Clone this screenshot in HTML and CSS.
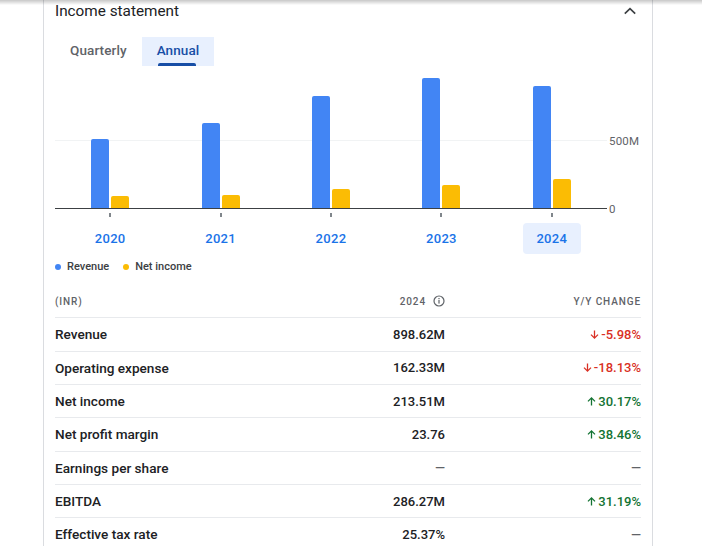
FILE: index.html
```html
<!DOCTYPE html>
<html lang="en">
<head>
<meta charset="utf-8">
<title>Income statement</title>
<link rel="stylesheet" href="styles.css">
</head>
<body>
<div class="topshadow"></div>
<section class="card">
  <header class="card-head">
    <h2 class="title">Income statement</h2>
    <svg class="chev" width="20" height="20" viewBox="0 0 20 20"><polyline points="4.8,12.6 10,7.6 15.2,12.6" fill="none" stroke="#3c4043" stroke-width="1.7"/></svg>
  </header>

  <nav class="tabs">
    <span class="tab">Quarterly</span>
    <span class="tab tab-active">Annual</span>
  </nav>

  <div class="chart">
    <div class="plot">
      <div class="gridline"></div>
      <div class="col"><span class="bar rev" style="height:69px"></span><span class="bar ni" style="height:12px"></span></div>
      <div class="col"><span class="bar rev" style="height:85px"></span><span class="bar ni" style="height:13px"></span></div>
      <div class="col"><span class="bar rev" style="height:112px"></span><span class="bar ni" style="height:19px"></span></div>
      <div class="col"><span class="bar rev" style="height:130px"></span><span class="bar ni" style="height:23px"></span></div>
      <div class="col"><span class="bar rev" style="height:122px"></span><span class="bar ni" style="height:29px"></span></div>
      <span class="ylabel y500">500M</span>
      <span class="ylabel y0">0</span>
    </div>
    <div class="ticks">
      <span class="tick"></span><span class="tick"></span><span class="tick"></span><span class="tick"></span><span class="tick"></span>
    </div>
    <div class="years">
      <span class="year">2020</span>
      <span class="year">2021</span>
      <span class="year">2022</span>
      <span class="year">2023</span>
      <span class="year year-active">2024</span>
    </div>
  </div>

  <div class="legend">
    <span class="leg"><i class="dot dot-rev"></i>Revenue</span>
    <span class="leg"><i class="dot dot-ni"></i>Net income</span>
  </div>

  <div class="table">
    <div class="row head">
      <span class="c-label">(INR)</span>
      <span class="c-val">2024 <svg class="info" width="12" height="12" viewBox="0 0 12 12"><circle cx="6" cy="6" r="5" fill="none" stroke="#5f6368" stroke-width="1.2"/><rect x="5.4" y="5" width="1.2" height="3.6" fill="#5f6368"/><rect x="5.4" y="3" width="1.2" height="1.2" fill="#5f6368"/></svg></span>
      <span class="c-chg">Y/Y change</span>
    </div>
    <div class="row">
      <span class="c-label">Revenue</span>
      <span class="c-val">898.62M</span>
      <span class="c-chg down"><svg class="arr" width="11" height="11" viewBox="0 0 11 11"><path d="M5.5 1.5v7.5M2 5.6l3.5 3.5 3.5-3.5" fill="none" stroke="currentColor" stroke-width="1.3"/></svg>-5.98%</span>
    </div>
    <div class="row">
      <span class="c-label">Operating expense</span>
      <span class="c-val">162.33M</span>
      <span class="c-chg down"><svg class="arr" width="11" height="11" viewBox="0 0 11 11"><path d="M5.5 1.5v7.5M2 5.6l3.5 3.5 3.5-3.5" fill="none" stroke="currentColor" stroke-width="1.3"/></svg>-18.13%</span>
    </div>
    <div class="row">
      <span class="c-label">Net income</span>
      <span class="c-val">213.51M</span>
      <span class="c-chg up"><svg class="arr" width="11" height="11" viewBox="0 0 11 11"><path d="M5.5 9.5V2M2 5.4l3.5-3.5 3.5 3.5" fill="none" stroke="currentColor" stroke-width="1.3"/></svg>30.17%</span>
    </div>
    <div class="row">
      <span class="c-label">Net profit margin</span>
      <span class="c-val">23.76</span>
      <span class="c-chg up"><svg class="arr" width="11" height="11" viewBox="0 0 11 11"><path d="M5.5 9.5V2M2 5.4l3.5-3.5 3.5 3.5" fill="none" stroke="currentColor" stroke-width="1.3"/></svg>38.46%</span>
    </div>
    <div class="row">
      <span class="c-label">Earnings per share</span>
      <span class="c-val dash">—</span>
      <span class="c-chg dash">—</span>
    </div>
    <div class="row">
      <span class="c-label">EBITDA</span>
      <span class="c-val">286.27M</span>
      <span class="c-chg up"><svg class="arr" width="11" height="11" viewBox="0 0 11 11"><path d="M5.5 9.5V2M2 5.4l3.5-3.5 3.5 3.5" fill="none" stroke="currentColor" stroke-width="1.3"/></svg>31.19%</span>
    </div>
    <div class="row">
      <span class="c-label">Effective tax rate</span>
      <span class="c-val">25.37%</span>
      <span class="c-chg dash">—</span>
    </div>
  </div>
</section>
</body>
</html>
```
FILE: styles.css
```css
* { box-sizing: border-box; }
html, body { margin: 0; padding: 0; background: #fff; }
body {
  font-family: Roboto, "Liberation Sans", Arial, sans-serif;
  color: #202124;
  width: 702px;
  height: 546px;
  overflow: hidden;
}
.topshadow {
  position: fixed;
  top: 0; left: 0; right: 0;
  height: 5px;
  background: linear-gradient(to bottom, rgba(0,0,0,0.22), rgba(0,0,0,0));
  z-index: 5;
}
.card {
  margin-left: 43px;
  width: 610px;
  border-left: 1px solid #dadce0;
  border-right: 1px solid #dadce0;
  padding: 0 11px;
  min-height: 546px;
}
.card-head {
  display: flex;
  align-items: center;
  justify-content: space-between;
  height: 22px;
}
.title {
  margin: 0;
  font-size: 15.3px;
  font-weight: 400;
  line-height: 24px;
  color: #202124;
}
.chev { margin-right: 1px; display: block; }

.tabs {
  display: flex;
  margin-top: 15px;
  height: 29px;
}
.tab {
  display: flex;
  align-items: center;
  padding: 0 15px 3px 15px;
  font-size: 13.5px;
  font-weight: 500;
  color: #5f6368;
  letter-spacing: 0.1px;
}
.tab-active {
  position: relative;
  background: #e8f0fe;
  color: #174ea6;
}
.tab-active::after {
  content: "";
  position: absolute;
  left: 16px;
  bottom: 0;
  width: 38px;
  height: 3px;
  border-radius: 2px 2px 0 0;
  background: #174ea6;
}

.chart { margin-top: 4px; width: 552px; }
.plot {
  position: relative;
  height: 139px;
  display: grid;
  grid-template-columns: repeat(5, 1fr);
  border-bottom: 1px solid #3c4043;
}
.gridline {
  position: absolute;
  left: 0; right: 0;
  bottom: 67px;
  height: 1px;
  background: #f1f3f4;
}
.col {
  display: flex;
  justify-content: center;
  align-items: flex-end;
  gap: 2px;
  position: relative;
}
.bar {
  display: block;
  width: 18px;
  border-radius: 2px 2px 0 0;
}
.rev { background: #4285f4; }
.ni { background: #fbbc04; }
.ylabel {
  position: absolute;
  left: 554px;
  font-size: 11.5px;
  color: #5f6368;
  line-height: 12px;
  letter-spacing: 0.2px;
}
.y500 { bottom: 61px; }
.y0 { bottom: -7px; }

.ticks {
  display: grid;
  grid-template-columns: repeat(5, 1fr);
  height: 14px;
  padding-top: 4px;
}
.tick {
  justify-self: center;
  width: 2px;
  height: 4px;
  background: #80868b;
}
.years {
  display: grid;
  grid-template-columns: repeat(5, 1fr);
}
.year {
  justify-self: center;
  width: 58px;
  height: 31px;
  display: flex;
  align-items: center;
  justify-content: center;
  font-size: 13px;
  font-weight: 500;
  color: #1a73e8;
  border-radius: 4px;
  letter-spacing: 0.3px;
}
.year-active { background: #e8f0fe; }

.legend {
  display: flex;
  gap: 14px;
  margin-top: 5px;
  height: 14px;
  align-items: center;
}
.leg {
  display: flex;
  align-items: center;
  font-size: 11px;
  font-weight: 500;
  color: #3c4043;
}
.dot {
  width: 6px; height: 6px;
  border-radius: 50%;
  margin: 1px 6px 0 0;
  display: inline-block;
}
.dot-rev { background: #4285f4; }
.dot-ni { background: #fbbc04; }

.table { margin-top: 12px; }
.row {
  display: grid;
  grid-template-columns: 1fr 120px 196px;
  align-items: center;
  height: 33.33px;
  border-bottom: 1px solid #e8eaed;
  font-size: 13px;
  font-weight: 500;
  color: #202124;
}
.c-label { font-size: 13.6px; }
.row.head .c-label { font-size: 10px; }
.row.head {
  font-size: 10px;
  color: #5f6368;
  letter-spacing: 0.9px;
  text-transform: uppercase;
}
.c-val, .c-chg {
  display: flex;
  justify-content: flex-end;
  align-items: center;
}
.info { margin-left: 7px; }
.down { color: #d93025; }
.up { color: #137333; }
.arr { margin-right: 1px; }
.dash { color: #5f6368; }
```
